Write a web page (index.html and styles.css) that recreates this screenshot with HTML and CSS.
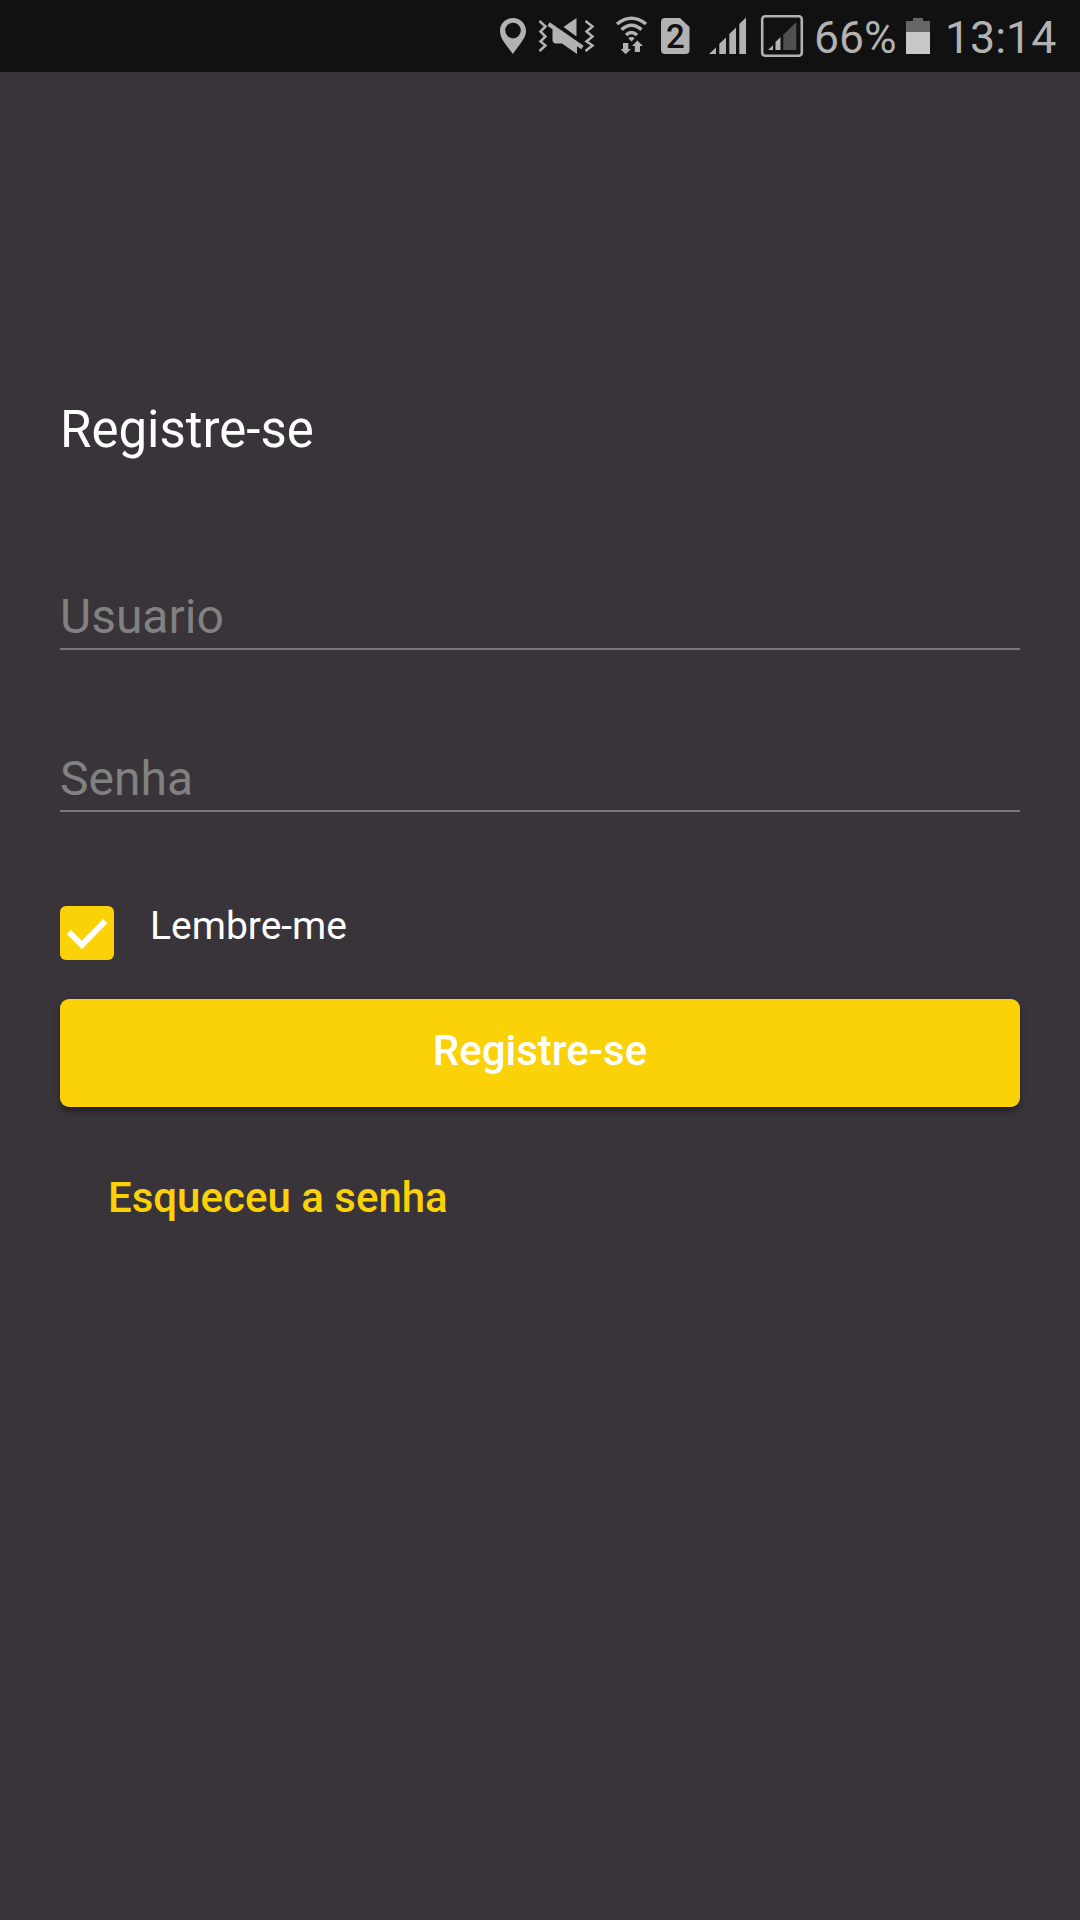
FILE: index.html
```html
<!DOCTYPE html>
<html lang="pt-BR">

<head>
    <meta charset="UTF-8">
    <meta name="viewport" content="width=device-width, initial-scale=1.0">
    <title>Registre-se</title>
    <link rel="stylesheet" href="styles.css">
</head>

<body>
    <div class="status-bar">
        <svg class="icon-location" width="28" height="72" viewBox="0 0 28 72">
            <path fill-rule="evenodd" d="M14 18C6.600 18 1 23.800 1 31C1 36 3.400 40 6 43.500L13.800 54L21.500 43.500C24.300 39.500 27 36 27 31C27 23.800 21.400 18 14 18ZM14 22.800A7.800 7.800 0 1 1 14 38.400A7.800 7.800 0 1 1 14 22.800Z" />
        </svg>
        <svg class="icon-mute" width="54" height="72" viewBox="0 0 54 72">
            <path d="M35.500 18V36.500L22.500 27Z" />
            <path d="M11.500 29.500H14.500L36 45V54L21 43.500H15Q11.500 43.500 11.500 39.500Z" />
            <path class="line" stroke-width="4" d="M7.500 24L41.500 47.500" />
            <path class="line" stroke-width="2.500" d="M-1.500 21L4.500 26.500L-.5 31.500L4.500 36.500L-.5 41.500L4.500 45.500L-1.500 51" />
            <path class="line" stroke-width="2.500" d="M44.500 21L51.500 26.500L45.500 31.500L51.500 36.500L45.500 41.500L51.500 45.500L44.500 51" />
        </svg>
        <svg class="icon-wifi" width="32" height="72" viewBox="0 0 32 72">
            <path class="line" stroke-width="3.500" d="M1 24Q15.500 12.500 30 24M5.500 29.600Q15.500 21 25.500 29.600M10 35Q15.500 30 21 35" />
            <path d="M12.300 38.300Q15.500 35.800 18.700 38.300L15.500 41.500Z" />
            <path d="M7 43H12.300V49H15L9.700 54.300L4.500 49H7Z" />
            <path d="M18.800 52V46H16L21.300 40.500L27 46H24V52Z" />
        </svg>
        <svg class="icon-sim" width="30" height="72" viewBox="0 0 30 72">
            <path d="M4 18H19L28.500 27V50Q28.500 54 24.500 54H4Q0 54 0 50V22Q0 18 4 18Z" />
            <text x="14.500" y="47.500">2</text>
        </svg>
        <svg class="icon-signal" width="38" height="72" viewBox="0 0 38 72">
            <path d="M0 54L7 47.500V54ZM10.300 54V43.800L17 37.500V54ZM20.300 54V34L27 27.500V54ZM30.300 54V24L37 17.500V54Z" />
        </svg>
        <svg class="icon-signal2" width="42" height="72" viewBox="0 0 42 72">
            <rect class="line" x="1.200" y="16.200" width="39.600" height="39.600" rx="3" stroke-width="2.600" />
            <path d="M7 50L12 45.200V50ZM14.500 50V42L19.500 37V50Z" />
            <path class="dim" d="M22.300 50V34.700L35.300 22V50Z" />
        </svg>
        <span class="percent">66%</span>
        <svg class="icon-battery" width="24" height="72" viewBox="0 0 24 72">
            <path class="empty" d="M0 21H7V18H17V21H24V33H0Z" />
            <path class="full" d="M0 32H24V54H0Z" />
        </svg>
        <span class="clock">13:14</span>
    </div>

    <form class="register">
        <h1 class="title">Registre-se</h1>
        <input class="field" type="text" placeholder="Usuario">
        <input class="field" type="password" placeholder="Senha">
        <label class="remember">
            <input class="remember-input" type="checkbox" checked>
            <span class="checkbox">
                <svg width="54" height="54" viewBox="0 0 54 54">
                    <path d="M8.800 26L21.800 39L45.200 15.200" />
                </svg>
            </span>
            <span class="remember-text">Lembre-me</span>
        </label>
        <button class="register-btn" type="button">Registre-se</button>
        <a class="forgot" href="#">Esqueceu a senha</a>
    </form>
</body>

</html>
```
FILE: styles.css
```css
body {
    margin: 0;
    height: 1920px;
    background-color: #39343a;
    font-family: Roboto, sans-serif;
    color: #fff;
}

.status-bar {
    display: flex;
    justify-content: flex-end;
    height: 72px;
    padding-right: 23px;
    background-color: #111;
    color: #b2b2b2;
    font-size: 45px;
    line-height: 76px;
}

.status-bar svg {
    flex: none;
    fill: #b2b2b2;
    overflow: visible;
}

.status-bar .line {
    fill: none;
    stroke: #b2b2b2;
}

.icon-location {
    margin-right: 14px;
}

.icon-mute {
    margin-right: 21px;
}

.icon-wifi {
    margin-right: 13px;
}

.icon-sim {
    margin-right: 18px;
}

.icon-sim text {
    fill: #111;
    font-size: 33px;
    font-weight: 500;
    text-anchor: middle;
}

.icon-signal {
    margin-right: 14px;
}

.icon-signal2 {
    margin-right: 11px;
}

.icon-signal2 .dim {
    fill: #505050;
}

.percent {
    width: 83px;
    margin-right: 9px;
    font-size: 44.5px;
}

.icon-battery .empty {
    fill: #666;
}

.icon-battery .full {
    fill: #c8c8c8;
}

.clock {
    width: 112px;
    margin-left: 15px;
    font-size: 44.7px;
}

.register {
    display: flex;
    flex-direction: column;
    padding: 328px 60px 0;
}

.title {
    margin: 0 0 126px;
    font-size: 51px;
    font-weight: 400;
    line-height: 60px;
}

.field {
    box-sizing: border-box;
    height: 64px;
    margin: 0 0 98px;
    padding: 0 0 2px;
    border: 0;
    border-bottom: 2px solid #7b777b;
    outline: none;
    background: none;
    color: #fff;
    font-family: inherit;
    font-size: 48px;
}

.field::placeholder {
    color: #828182;
    opacity: 1;
}

.remember {
    display: flex;
    height: 54px;
    margin-top: -4px;
    margin-bottom: 39px;
}

.remember-input {
    display: none;
}

.checkbox {
    width: 54px;
    height: 54px;
    border-radius: 6px;
    background-color: #fbd108;
}

.checkbox path {
    fill: none;
    stroke: #fff;
    stroke-width: 6;
}

.remember-text {
    margin-left: 36px;
    font-size: 39px;
    line-height: 41px;
}

.register-btn {
    height: 108px;
    padding: 0 0 6px;
    border: 0;
    border-radius: 9px;
    background-color: #fbd108;
    box-shadow: 0 6px 6px -3px rgba(0, 0, 0, 0.35), 0 2px 9px rgba(0, 0, 0, 0.25);
    color: #fff;
    font-family: inherit;
    font-size: 42px;
    font-weight: 500;
}

.forgot {
    align-self: flex-start;
    margin: 61px 0 0 48px;
    color: #fbd108;
    font-size: 42px;
    font-weight: 500;
    line-height: 60px;
    text-decoration: none;
}
```
